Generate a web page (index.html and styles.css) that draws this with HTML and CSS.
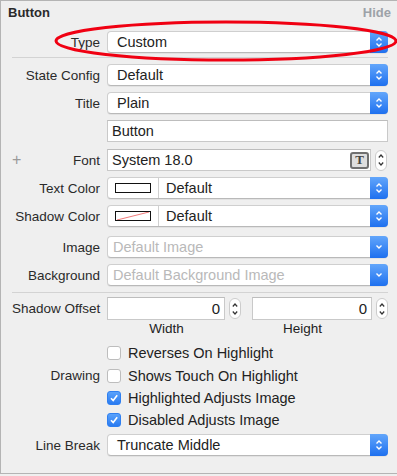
FILE: index.html
```html
<!Doctype html>
<html lang='en'>
<head>
    <meta charset='utf-8'>
    <title>Button Attributes</title>
    <link rel="stylesheet" href="styles.css">
</head>
<body>
    <div class='panel'>
        <div class='head'>
            <span class='head-title'>Button</span>
            <span class='head-hide'>Hide</span>
        </div>

        <div class='section first'>
            <div class='row'>
                <label>Type</label>
                <div class='popup'><span class='val'>Custom</span><span class='arrows'><svg width='8' height='12' viewBox='0 0 8 12'><path d='M1.5 4.5L4 2L6.5 4.5M1.5 7.5L4 10L6.5 7.5'/></svg></span></div>
            </div>
        </div>
        <div class='sep'></div>

        <div class='section middle'>
            <div class='row'>
                <label>State Config</label>
                <div class='popup'><span class='val'>Default</span><span class='arrows'><svg width='8' height='12' viewBox='0 0 8 12'><path d='M1.5 4.5L4 2L6.5 4.5M1.5 7.5L4 10L6.5 7.5'/></svg></span></div>
            </div>
            <div class='row'>
                <label>Title</label>
                <div class='popup'><span class='val'>Plain</span><span class='arrows'><svg width='8' height='12' viewBox='0 0 8 12'><path d='M1.5 4.5L4 2L6.5 4.5M1.5 7.5L4 10L6.5 7.5'/></svg></span></div>
            </div>
            <div class='row'>
                <label></label>
                <div class='field'><span class='val'>Button</span></div>
            </div>
            <div class='row font-row'>
                <label class='plus-label'><span class='plus'>+</span><span>Font</span></label>
                <div class='inline'>
                    <div class='field font-field'><span class='val'>System 18.0</span><span class='t-icon'>T</span></div>
                    <div class='stepper'><svg width='8' height='16' viewBox='0 0 8 16'><path d='M1.8 5.5L4 3L6.2 5.5M1.8 10.5L4 13L6.2 10.5'/></svg></div>
                </div>
            </div>
            <div class='row'>
                <label>Text Color</label>
                <div class='popup'><span class='well'><span class='swatch'></span></span><span class='val'>Default</span><span class='arrows'><svg width='8' height='12' viewBox='0 0 8 12'><path d='M1.5 4.5L4 2L6.5 4.5M1.5 7.5L4 10L6.5 7.5'/></svg></span></div>
            </div>
            <div class='row'>
                <label>Shadow Color</label>
                <div class='popup'><span class='well'><span class='swatch'><svg width='34' height='8' viewBox='0 0 34 8'><line x1='1' y1='8' x2='33' y2='0'/></svg></span></span><span class='val'>Default</span><span class='arrows'><svg width='8' height='12' viewBox='0 0 8 12'><path d='M1.5 4.5L4 2L6.5 4.5M1.5 7.5L4 10L6.5 7.5'/></svg></span></div>
            </div>
            <div class='row image-row'>
                <label>Image</label>
                <div class='popup off'><span class='val'>Default Image</span><span class='arrows'><svg width='8' height='12' viewBox='0 0 8 12'><path d='M1.5 4.5L4 7L6.5 4.5'/></svg></span></div>
            </div>
            <div class='row'>
                <label>Background</label>
                <div class='popup off'><span class='val'>Default Background Image</span><span class='arrows'><svg width='8' height='12' viewBox='0 0 8 12'><path d='M1.5 4.5L4 7L6.5 4.5'/></svg></span></div>
            </div>
        </div>
        <div class='sep'></div>

        <div class='section last'>
            <div class='row offset-row'>
                <label>Shadow Offset</label>
                <div class='inline'>
                    <div class='field num w1'><span class='val'>0</span></div>
                    <div class='stepper small'><svg width='8' height='16' viewBox='0 0 8 16'><path d='M1.8 5.5L4 3L6.2 5.5M1.8 10.5L4 13L6.2 10.5'/></svg></div>
                    <div class='field num w2'><span class='val'>0</span></div>
                    <div class='stepper'><svg width='8' height='16' viewBox='0 0 8 16'><path d='M1.8 5.5L4 3L6.2 5.5M1.8 10.5L4 13L6.2 10.5'/></svg></div>
                </div>
            </div>
            <div class='row caption-row'>
                <label></label>
                <div class='inline'>
                    <span class='cap w1'>Width</span>
                    <span class='cap w2'>Height</span>
                </div>
            </div>
            <div class='row check-row'>
                <label></label>
                <div class='check'><span class='box'></span>Reverses On Highlight</div>
            </div>
            <div class='row check-row'>
                <label>Drawing</label>
                <div class='check'><span class='box'></span>Shows Touch On Highlight</div>
            </div>
            <div class='row check-row short'>
                <label></label>
                <div class='check'><span class='box on'><svg width='10' height='10' viewBox='0 0 10 10'><path d='M2 5.2L4.2 7.6L8.2 2.2'/></svg></span>Highlighted Adjusts Image</div>
            </div>
            <div class='row check-row short'>
                <label></label>
                <div class='check'><span class='box on'><svg width='10' height='10' viewBox='0 0 10 10'><path d='M2 5.2L4.2 7.6L8.2 2.2'/></svg></span>Disabled Adjusts Image</div>
            </div>
            <div class='row break-row'>
                <label>Line Break</label>
                <div class='popup'><span class='val'>Truncate Middle</span><span class='arrows'><svg width='8' height='12' viewBox='0 0 8 12'><path d='M1.5 4.5L4 2L6.5 4.5M1.5 7.5L4 10L6.5 7.5'/></svg></span></div>
            </div>
        </div>

        <!-- annotation ring drawn over the Type row -->
        <svg class='ring' width='397' height='70' viewBox='0 0 397 70'><ellipse cx='226' cy='41' rx='170' ry='19'/></svg>
    </div>
</body>
</html>
```

FILE: styles.css
```css
html,
body {
    margin: 0;
    background-color: #efefef;
    font-family: "Liberation Sans", Arial, sans-serif;
    color: #222222;
}

.panel {
    position: relative;
    width: 397px;
    height: 474px;
    box-sizing: border-box;
    border-top: 1px solid #b4b4b4;
    border-left: 1px solid #b4b4b4;
    border-bottom: 1px solid #b4b4b4;
    background-color: #efefef;
    overflow: hidden;
}

.head {
    height: 30px;
    box-sizing: border-box;
    padding: 4px 6px 0 7px;
    display: flex;
    justify-content: space-between;
    font-size: 13px;
    line-height: 16px;
    font-weight: bold;
}
.head-title {
    color: #2a2a2a;
}
.head-hide {
    color: #9da2a8;
}

.sep {
    height: 1px;
    margin: 0 9px 0 11px;
    background-color: #d3d3d3;
}

.section {
    padding-left: 11px;
    padding-right: 9px;
}
.section.first {
    padding-bottom: 4px;
}
.section.middle {
    padding-bottom: 6px;
}
.section.last {
    padding-top: 4px;
}

.row {
    display: grid;
    grid-template-columns: 88px 281px;
    column-gap: 7px;
    align-items: center;
    height: 22px;
    margin-top: 6px;
}
.section.first .row,
.section.last .offset-row {
    margin-top: 0;
}
.font-row {
    margin-top: 7px;
}
.image-row {
    margin-top: 9px;
}

label {
    text-align: right;
    font-size: 13.5px;
    color: #2a2a2a;
    white-space: nowrap;
}
.plus-label {
    display: flex;
    justify-content: space-between;
}
.plus {
    color: #9a9a9a;
    font-size: 16px;
    line-height: 14px;
}

.val {
    flex: 1;
    font-size: 14.5px;
    white-space: nowrap;
    overflow: hidden;
}

/* popup buttons */
.popup {
    height: 22px;
    box-sizing: border-box;
    display: flex;
    align-items: center;
    background-color: #ffffff;
    border: 1px solid #cfcfcf;
    border-bottom-color: #b9b9b9;
    border-radius: 4px;
    box-shadow: 0 1px 0 rgba(0, 0, 0, 0.05);
}
.popup .val {
    padding-left: 9px;
}
.popup.off .val {
    padding-left: 5px;
    color: #b9b9b9;
}
.arrows {
    width: 18px;
    height: 22px;
    margin: -1px -1px -1px 0;
    display: flex;
    align-items: center;
    justify-content: center;
    border-radius: 0 4px 4px 0;
    background: linear-gradient(#62a6fb, #1e70ef);
}
.arrows path {
    fill: none;
    stroke: #ffffff;
    stroke-width: 1.4;
}

/* colour well inside the popup */
.well {
    width: 50px;
    height: 20px;
    display: flex;
    align-items: center;
    justify-content: center;
    border-right: 1px solid #d0d0d0;
}
.swatch {
    width: 34px;
    height: 8px;
    display: flex;
    border: 1px solid #111111;
    background-color: #ffffff;
}
.swatch line {
    stroke: #f07a7a;
    stroke-width: 1;
}
.well + .val {
    padding-left: 7px;
}

/* text fields */
.field {
    height: 22px;
    box-sizing: border-box;
    display: flex;
    align-items: center;
    background-color: #ffffff;
    border: 1px solid #c9c9c9;
    border-top-color: #bdbdbd;
}
.field .val {
    padding-left: 4px;
}
.inline {
    display: flex;
    align-items: center;
}
.font-field {
    width: 264px;
}
.t-icon {
    width: 15px;
    height: 13px;
    margin-right: 1px;
    display: flex;
    align-items: center;
    justify-content: center;
    border: 2px solid #707070;
    border-radius: 3px;
    background-color: #dedede;
    font-family: "Liberation Serif", serif;
    font-size: 13px;
    font-weight: bold;
    color: #444444;
}
.stepper {
    width: 12px;
    height: 21px;
    margin-left: 4px;
    box-sizing: border-box;
    display: flex;
    align-items: center;
    justify-content: center;
    background-color: #ffffff;
    border: 1px solid #cccccc;
    border-radius: 6px;
}
.stepper path {
    fill: none;
    stroke: #333333;
    stroke-width: 1.2;
}
.stepper.small {
    margin-right: 11px;
}
.num .val {
    text-align: right;
    padding-right: 4px;
    font-size: 15px;
}
.w1 {
    width: 119px;
}
.w2 {
    width: 121px;
}
.offset-row {
    height: 23px;
}
.offset-row .field {
    height: 23px;
}

.caption-row {
    height: 16px;
    margin-top: 0;
}
.cap {
    display: block;
    text-align: center;
    font-size: 13.5px;
}
.cap.w1 {
    margin-right: 16px;
}

/* checkboxes */
.check-row {
    height: 23px;
    margin-top: 0;
}
.caption-row + .check-row {
    margin-top: 5px;
}
.check-row.short {
    height: 22px;
}
.check {
    display: flex;
    align-items: center;
    font-size: 14.5px;
    white-space: nowrap;
}
.box {
    width: 14px;
    height: 14px;
    margin-right: 7px;
    box-sizing: border-box;
    display: flex;
    align-items: center;
    justify-content: center;
    background-color: #ffffff;
    border: 1px solid #bdbdbd;
    border-radius: 3px;
}
.box.on {
    border-color: #2f7ff0;
    background: linear-gradient(#5aa2fb, #2a7bf1);
}
.box path {
    fill: none;
    stroke: #ffffff;
    stroke-width: 1.6;
}
.break-row {
    margin-top: 3px;
}

.ring {
    position: absolute;
    top: -1px;
    left: -1px;
}
.ring ellipse {
    fill: none;
    stroke: #f00012;
    stroke-width: 3;
}
```
